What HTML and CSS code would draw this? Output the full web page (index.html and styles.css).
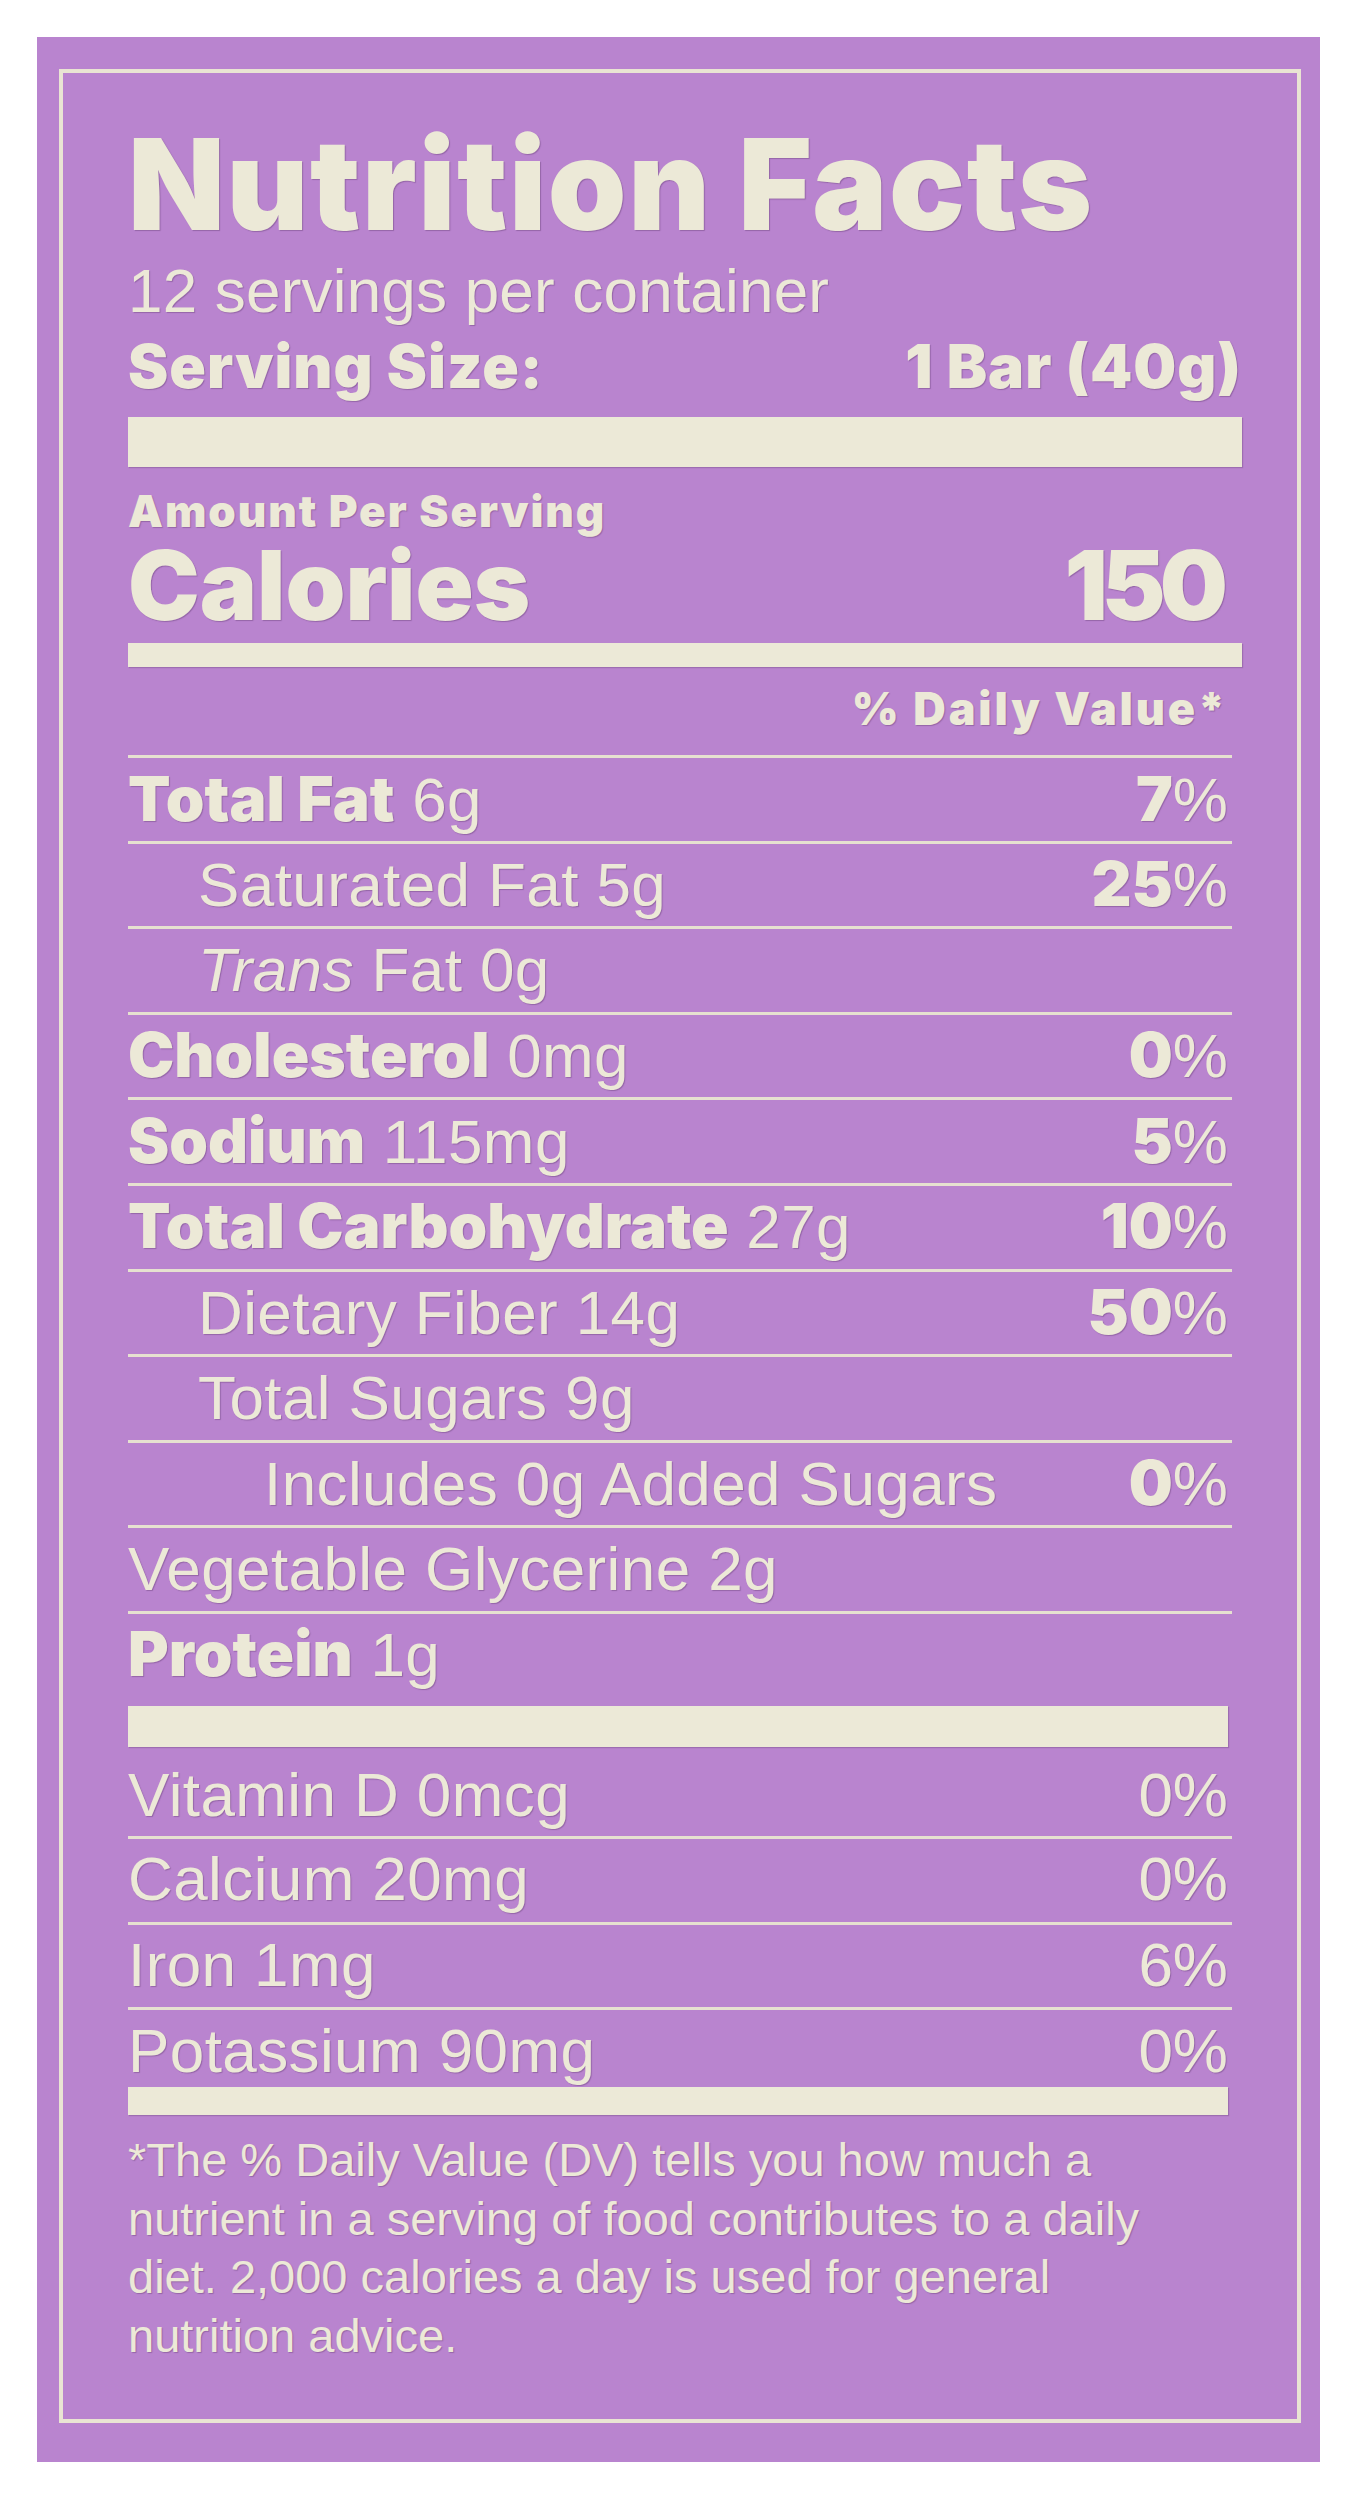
FILE: index.html
```html
<!DOCTYPE html>
<html lang="en">
<head>
<meta charset="utf-8">
<title>Nutrition Facts</title>
<link rel="stylesheet" href="styles.css">
</head>
<body>
<div class="panel">
  <div class="label">
    <h1 class="title">Nutrition Facts</h1>
    <p class="servings">12 servings per container</p>
    <div class="serving-size"><span>Serving Size:</span><span>1 Bar (40g)</span></div>
    <div class="bar bar-thick"></div>
    <p class="amount">Amount Per Serving</p>
    <div class="calories"><span>Calories</span><span class="cal-num">150</span></div>
    <div class="bar bar-med"></div>
    <p class="dv-head">% Daily Value*</p>

    <div class="row"><span><b>Total Fat</b> 6g</span><span class="pct"><b>7</b>%</span></div>
    <div class="row"><span class="ind1">Saturated Fat 5g</span><span class="pct"><b>25</b>%</span></div>
    <div class="row"><span class="ind1"><i>Trans</i> Fat 0g</span></div>
    <div class="row"><span><b>Cholesterol</b> 0mg</span><span class="pct"><b>0</b>%</span></div>
    <div class="row"><span><b>Sodium</b> 115mg</span><span class="pct"><b>5</b>%</span></div>
    <div class="row"><span><b>Total Carbohydrate</b> 27g</span><span class="pct"><b>10</b>%</span></div>
    <div class="row"><span class="ind1">Dietary Fiber 14g</span><span class="pct"><b>50</b>%</span></div>
    <div class="row"><span class="ind1">Total Sugars 9g</span></div>
    <div class="row"><span class="ind2">Includes 0g Added Sugars</span><span class="pct"><b>0</b>%</span></div>
    <div class="row"><span>Vegetable Glycerine 2g</span></div>
    <div class="row"><span><b>Protein</b> 1g</span></div>

    <div class="bar bar-low"></div>

    <div class="row row-first"><span>Vitamin D 0mcg</span><span class="pct">0%</span></div>
    <div class="row"><span>Calcium 20mg</span><span class="pct">0%</span></div>
    <div class="row"><span>Iron 1mg</span><span class="pct">6%</span></div>
    <div class="row row-last"><span>Potassium 90mg</span><span class="pct">0%</span></div>

    <div class="bar bar-bottom"></div>

    <p class="footnote">*The % Daily Value (DV) tells you how much a<br>nutrient in a serving of food contributes to a daily<br>diet. 2,000 calories a day is used for general<br>nutrition advice.</p>
  </div>
</div>
</body>
</html>
```

FILE: styles.css
```css
* { box-sizing: border-box; }

html, body {
  margin: 0;
  padding: 0;
  background: #ffffff;
}

.panel {
  margin: 37px 0 0 37px;
  width: 1283px;
  height: 2425px;
  padding: 32px 19px 39px 22px;
  background: #b984cf;
}

.label {
  height: 100%;
  border: 4px solid #e9e4d3;
  padding: 0 55px 0 65px;
  color: #ece9d7;
  font-family: "Liberation Sans", Arial, sans-serif;
  font-size: 62px;
  line-height: 62px;
  text-shadow: 1px 1px 1px rgba(105, 65, 120, 0.45);
}

.title,
.serving-size,
.amount,
.calories,
.dv-head,
.row b {
  font-family: Inter, "Liberation Sans", sans-serif;
  font-weight: 900;
}

.title {
  margin: 48px 0 0 0;
  font-size: 126px;
  line-height: 126px;
  letter-spacing: 1.6px;
}

.servings {
  margin: 12.5px 0 0 0;
  font-size: 62px;
  line-height: 62px;
  letter-spacing: 0.2px;
}

.serving-size {
  margin-top: 13.5px;
  display: flex;
  justify-content: space-between;
  font-size: 60.5px;
  line-height: 62px;
  letter-spacing: 1px;
}

.bar {
  background: #ece9d7;
  box-shadow: 1px 1px 1px rgba(105, 65, 120, 0.35);
}

.bar-thick {
  margin-top: 20px;
  height: 50px;
}

.amount {
  margin: 22px 0 0 0;
  font-size: 44px;
  line-height: 40px;
  padding-top: 2px;
  height: 44px;
  letter-spacing: 1.9px;
}

.calories {
  margin-top: 4px;
  display: flex;
  justify-content: space-between;
  padding-right: 14px;
  font-size: 96px;
  line-height: 96px;
}

.cal-num {
  letter-spacing: -6px;
  margin-right: 6px;
}

.bar-med {
  margin-top: 10px;
  height: 24px;
}

.dv-head {
  margin: 19px 0 0 0;
  padding-right: 14px;
  text-align: right;
  font-size: 45px;
  line-height: 45px;
  letter-spacing: 2.8px;
}

.dv-head + .row {
  margin-top: 24px;
}

.row {
  display: flex;
  justify-content: space-between;
  align-items: baseline;
  height: 85.6px;
  margin-right: 10px;
  padding: 9.5px 4px 0 0;
  border-top: 3px solid #e6e1d0;
  white-space: nowrap;
  letter-spacing: 0.4px;
}

.row b {
  font-size: 62px;
  letter-spacing: 0;
}

.row i {
  font-style: italic;
}

.pct {
  letter-spacing: 0;
}

.ind1 { padding-left: 70px; }
.ind2 { padding-left: 136px; }

.bar-low {
  margin: 9.4px 14px 0 0;
  height: 41px;
}

.row-first {
  border-top: none;
  height: 89px;
  padding-top: 17.5px;
}

.row-last {
  height: 79.8px;
}

.bar-bottom {
  margin-right: 14px;
  height: 28px;
}

.footnote {
  margin: 16.5px 0 0 0;
  font-size: 47px;
  line-height: 58.5px;
  white-space: nowrap;
}
```
